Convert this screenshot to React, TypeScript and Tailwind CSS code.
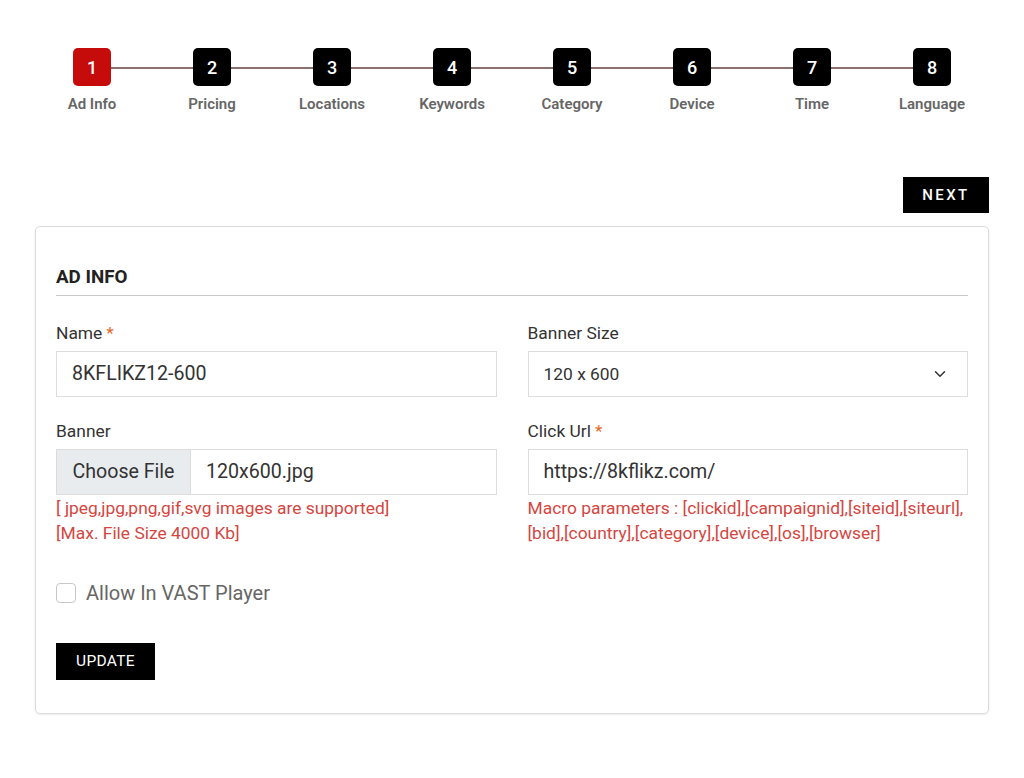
import { ChevronDown } from "lucide-react";

const STEPS = ["Ad Info", "Pricing", "Locations", "Keywords", "Category", "Device", "Time", "Language"];

function Stepper() {
  return (
    <div className="relative mx-auto grid w-[960px] grid-cols-8">
      {/* connector behind the boxes */}
      <div className="absolute left-[60px] right-[60px] top-[19px] h-[2px] bg-[#8a7070]" />
      {STEPS.map((s, i) => (
        <div key={s} className="relative flex flex-col items-center">
          <div
            className={
              "flex h-[38px] w-[38px] items-center justify-center rounded-[5px] text-[18px] font-medium text-white " +
              (i === 0 ? "bg-[#c60b0b]" : "bg-black")
            }
          >
            {i + 1}
          </div>
          <div className="mt-[9px] text-[15px] font-semibold leading-[18px] text-[#666]">{s}</div>
        </div>
      ))}
    </div>
  );
}

function Label({ text, req }: { text: string; req?: boolean }) {
  return (
    <div className="mb-[6px] text-[17.4px] leading-[24px] text-[#333]">
      {text}
      {req && <span className="ml-1 text-[#e8692c]">*</span>}
    </div>
  );
}

export default function App() {
  return (
    <div className="min-h-screen bg-white pt-[48px] font-['Roboto','Liberation_Sans',sans-serif]">
      <Stepper />

      <div className="mx-[35px] mt-[64px] flex justify-end">
        <button className="h-[36px] w-[86px] bg-black text-[15px] font-medium tracking-[0.16em] text-white">NEXT</button>
      </div>

      <div className="mx-[35px] mt-[13px] rounded-[5px] border border-[#dcdcdc] px-[20px] pb-[33px] pt-[38px] shadow-[0_1px_3px_rgba(0,0,0,0.08)]">
        <h2 className="border-b border-[#c8c8c8] pb-[6px] text-[18.8px] font-bold leading-[24px] text-[#222]">AD INFO</h2>

        <div className="mt-[25px] grid grid-cols-2 gap-x-[31px]">
          <div>
            <Label text="Name" req />
            <div className="flex h-[46px] items-center border border-[#dcdcdc] px-[15px] text-[19.6px] text-[#333]">8KFLIKZ12-600</div>
          </div>
          <div>
            <Label text="Banner Size" />
            <div className="flex h-[46px] items-center justify-between border border-[#dcdcdc] pl-[15px] pr-[18px] text-[17.4px] text-[#333]">
              <span>120 x 600</span>
              <ChevronDown size={18} strokeWidth={2} className="text-[#333]" />
            </div>
          </div>

          <div className="mt-[22px]">
            <Label text="Banner" />
            <div className="flex h-[46px] border border-[#dcdcdc] text-[19.6px] text-[#333]">
              <div className="flex w-[134px] items-center justify-center border-r border-[#dcdcdc] bg-[#e9ecef]">Choose File</div>
              <div className="flex items-center pl-[15px]">120x600.jpg</div>
            </div>
            <div className="mt-[1px] text-[17.4px] leading-[25px] text-[#d4463f]">
              <div>[ jpeg,jpg,png,gif,svg images are supported]</div>
              <div>[Max. File Size 4000 Kb]</div>
            </div>
          </div>
          <div className="mt-[22px]">
            <Label text="Click Url" req />
            <div className="flex h-[46px] items-center border border-[#dcdcdc] px-[15px] text-[19.6px] text-[#333]">https://8kflikz.com/</div>
            <div className="mt-[1px] text-[17.4px] leading-[25px] text-[#d4463f]">
              Macro parameters : [clickid],[campaignid],[siteid],[siteurl],
              <br />
              [bid],[country],[category],[device],[os],[browser]
            </div>
          </div>
        </div>

        <label className="mt-[36px] flex items-center gap-[10px]">
          <span className="h-[20px] w-[20px] rounded-[4px] border border-[#c8c8c8] bg-white" />
          <span className="text-[20px] leading-[22px] text-[#666]">Allow In VAST Player</span>
        </label>

        <button className="mt-[39px] h-[37px] w-[99px] bg-black text-[15.5px] tracking-[0.02em] text-white">UPDATE</button>
      </div>
    </div>
  );
}
